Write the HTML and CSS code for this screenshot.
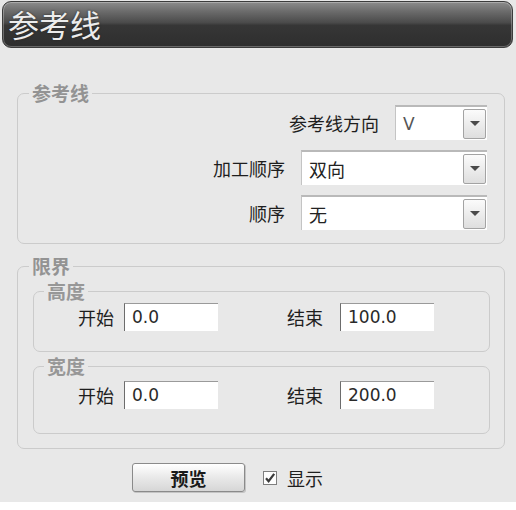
FILE: index.html
```html
<!DOCTYPE html>
<html lang="zh">
<head>
<meta charset="utf-8">
<title>参考线</title>
<link rel="stylesheet" href="styles.css">
</head>
<body>
<div class="dialog">
  <div class="titlebar"><span class="title">参考线</span></div>

  <fieldset class="group group-main">
    <legend>参考线</legend>
    <div class="row">
      <span class="label">参考线方向</span>
      <div class="combo combo-sm"><span class="val">V</span><span class="drop"></span></div>
    </div>
    <div class="row">
      <span class="label">加工顺序</span>
      <div class="combo"><span class="val">双向</span><span class="drop"></span></div>
    </div>
    <div class="row">
      <span class="label">顺序</span>
      <div class="combo"><span class="val">无</span><span class="drop"></span></div>
    </div>
  </fieldset>

  <fieldset class="group group-limit">
    <legend>限界</legend>
    <fieldset class="group sub sub-h">
      <legend>高度</legend>
      <div class="pairs">
        <div class="pair"><span class="label">开始</span><span class="field">0.0</span></div>
        <div class="pair pair-end"><span class="label">结束</span><span class="field">100.0</span></div>
      </div>
    </fieldset>
    <fieldset class="group sub sub-w">
      <legend>宽度</legend>
      <div class="pairs">
        <div class="pair"><span class="label">开始</span><span class="field">0.0</span></div>
        <div class="pair pair-end"><span class="label">结束</span><span class="field">200.0</span></div>
      </div>
    </fieldset>
  </fieldset>

  <div class="footer">
    <button class="btn" type="button">预览</button>
    <label class="check">
      <span class="box"><svg width="12" height="12" viewBox="0 0 12 12"><path d="M2 6.2 L4.6 9.2 L10.2 1.8" fill="none" stroke="#3a3a3a" stroke-width="2.2"/></svg></span>
      <span class="check-text">显示</span>
    </label>
  </div>
</div>
</body>
</html>
```

FILE: styles.css
```css
html {
  background: #ffffff;
}
body {
  margin: 0;
  width: 516px;
  height: 510px;
  background: #ffffff;
  font-family: "Noto Sans CJK SC", "Noto Sans", sans-serif;
  color: #1e1e1e;
  overflow: hidden;
}
.dialog {
  height: 502px;
  background: #e8e8e8;
  padding-top: 1px;
  box-sizing: border-box;
}
.titlebar {
  margin: 0 3px 0 2px;
  height: 47px;
  box-sizing: border-box;
  border: 1px solid #3c3c3c;
  border-radius: 9px;
  background: linear-gradient(#8c8c8c 0%, #6a6a6a 22%, #4a4a4a 46%, #363636 52%, #2e2e2e 100%);
  box-shadow: inset 0 0 0 1px rgba(255, 255, 255, 0.28);
  display: flex;
  align-items: center;
  padding-left: 5px;
}
.title {
  font-size: 31px;
  line-height: 36px;
  color: #ececec;
  text-shadow: 0 0 2px #222;
  margin-top: -2px;
}

.group {
  margin: 0;
  padding: 0;
  border: 1px solid #cbcbcb;
  border-radius: 7px;
  min-inline-size: 0;
}
.group > legend {
  font-size: 19px;
  line-height: 20px;
  font-weight: bold;
  color: #939393;
  padding: 0 3px;
  margin-left: 11px;
}
.group-main {
  margin: 35px 0 0 17px;
  width: 488px;
  box-sizing: border-box;
  padding: 2px 17px 13px 0;
}
.row {
  display: flex;
  justify-content: flex-end;
  align-items: center;
  gap: 16px;
  height: 35px;
}
.row + .row {
  margin-top: 10px;
}
.label {
  font-size: 18px;
  line-height: 24px;
  color: #1e1e1e;
}
.combo {
  width: 186px;
  height: 35px;
  box-sizing: border-box;
  background: #ffffff;
  border-top: 2px solid #b9b9b9;
  border-left: 1px solid #c4c4c4;
  display: flex;
  align-items: center;
  padding: 0 1px 0 7px;
}
.combo-sm {
  width: 92px;
}
.combo .val {
  flex: 1;
  font-size: 18px;
  color: #222;
}
.combo-sm .val {
  color: #555;
  font-family: "DejaVu Sans", sans-serif;
  font-size: 17px;
}
.drop {
  width: 23px;
  height: 30px;
  box-sizing: border-box;
  border: 1px solid #a3a3a3;
  border-radius: 2px;
  background: linear-gradient(#fbfbfb, #dedede);
  display: flex;
  align-items: center;
  justify-content: center;
}
.drop::after {
  content: "";
  border-left: 5px solid transparent;
  border-right: 5px solid transparent;
  border-top: 5px solid #4a4a4a;
}

.group-limit {
  margin: 12px 0 0 17px;
  width: 488px;
  box-sizing: border-box;
  padding: 5px 0 14px 0;
}
.sub {
  margin: 0 14px 0 15px;
}
.sub > legend {
  color: #979797;
  margin-left: 10px;
}
.sub-h {
  padding: 2px 0 20px 0;
}
.sub-w {
  margin-top: 4px;
  padding: 5px 0 24px 0;
}
.pairs {
  display: flex;
  align-items: center;
  padding-left: 44px;
}
.pair {
  display: flex;
  align-items: center;
  gap: 10px;
}
.pair-end {
  margin-left: 69px;
  gap: 17px;
}
.field {
  width: 94px;
  height: 28px;
  box-sizing: border-box;
  background: #ffffff;
  border-top: 1px solid #9a9a9a;
  border-left: 1px solid #6c6c6c;
  padding-left: 7px;
  font-family: "DejaVu Sans", sans-serif;
  font-size: 17px;
  line-height: 26px;
  color: #2a2a2a;
}

.footer {
  display: flex;
  align-items: center;
  margin-top: 14px;
  padding-left: 132px;
}
.btn {
  width: 113px;
  height: 29px;
  border: 1px solid #8a8a8a;
  border-radius: 3px;
  background: linear-gradient(#ffffff, #e9e9e9 50%, #d6d6d6);
  box-shadow: 1px 1px 0 #c4c4c4;
  font-family: "Noto Sans CJK SC", sans-serif;
  font-size: 18px;
  font-weight: bold;
  color: #1a1a1a;
  padding: 0;
  line-height: 26px;
}
.check {
  display: flex;
  align-items: center;
  margin-left: 18px;
  gap: 10px;
}
.box {
  width: 14px;
  height: 14px;
  box-sizing: border-box;
  border: 1px solid #7e7e7e;
  background: #fdfdfd;
  display: flex;
  align-items: center;
  justify-content: center;
}
.check-text {
  font-size: 18px;
  color: #1e1e1e;
}
```
